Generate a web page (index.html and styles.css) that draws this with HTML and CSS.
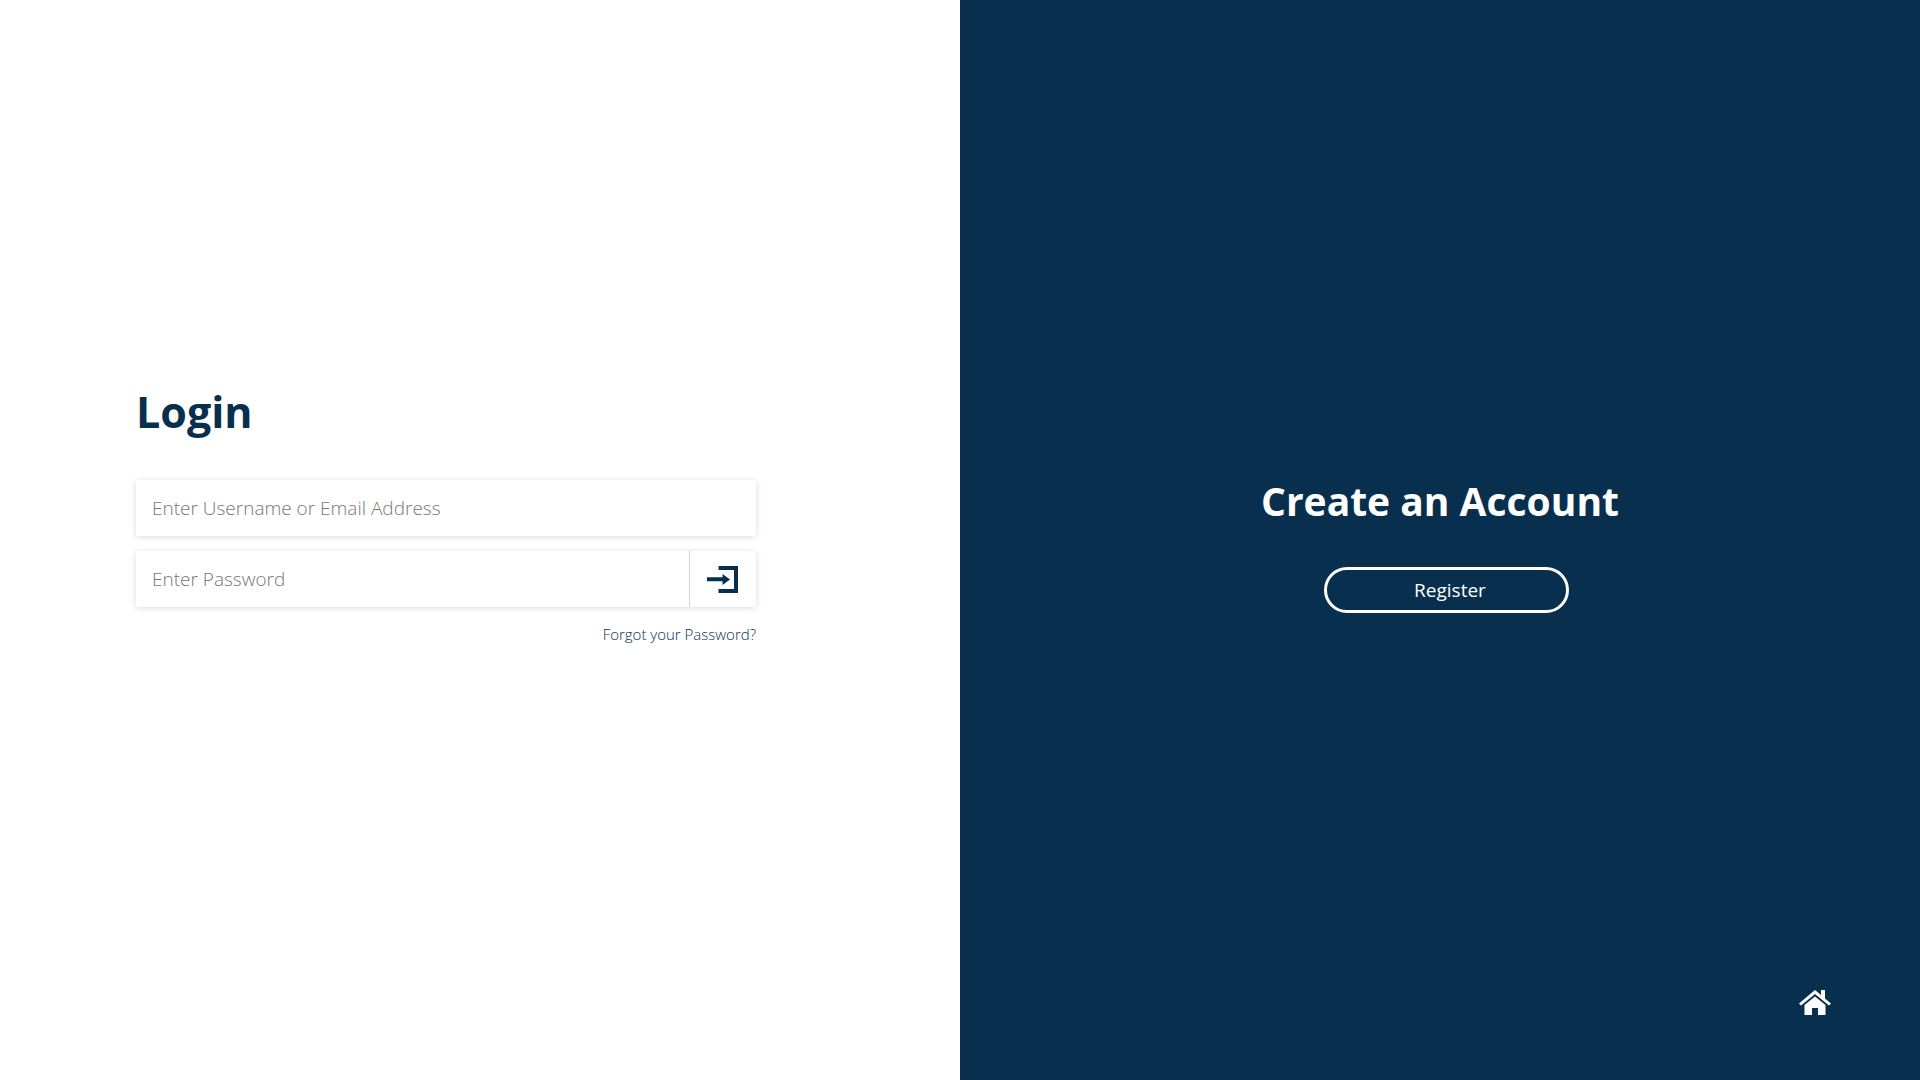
FILE: index.html
```html
<!DOCTYPE html>
<html lang="en">
<head>
  <meta charset="utf-8">
  <meta name="viewport" content="width=device-width, initial-scale=1">
  <title>Login</title>
  <link rel="stylesheet" href="styles.css">
</head>
<body>
  <main class="page">
    <section class="login">
      <form class="login-form">
        <h1 class="login-title">Login</h1>
        <div class="fields">
          <div class="field">
            <input class="field-input" type="text" aria-label="Username or email address" placeholder="Enter Username or Email Address">
          </div>
          <div class="field">
            <input class="field-input" type="password" aria-label="Password" placeholder="Enter Password">
            <button class="submit" type="submit" aria-label="Log in">
              <svg width="32" height="28" viewBox="0 0 32 28" fill="#08304e" aria-hidden="true">
                <path d="M11.500 1H31V28H11.500V24H27V5H11.500Z"/>
                <path d="M0 12.300H15.500V9L23 14.400L15.500 20V16.300H0Z"/>
              </svg>
            </button>
          </div>
        </div>
        <a class="forgot" href="#">Forgot your Password?</a>
      </form>
    </section>
    <section class="register">
      <h2 class="register-title">Create an Account</h2>
      <button class="register-button" type="button">Register</button>
      <a class="home" href="#" aria-label="Home">
        <svg width="32" height="26" viewBox="0 0 32 26" fill="#fff" aria-hidden="true">
          <path d="M16 0L22 5V0H26V8.400L32 13.400L30 15.500L16 4L2 15.500L0 13.400Z"/>
          <path d="M16 6.500L26.500 15V25H19V18H13V25H5.500V15Z"/>
        </svg>
      </a>
    </section>
  </main>
</body>
</html>
```
FILE: styles.css
```css
* {
  box-sizing: border-box;
}

body {
  margin: 0;
  font-family: "Open Sans", "Noto Sans", sans-serif;
  color: #08304e;
  background: #fff;
}

.page {
  display: grid;
  grid-template-columns: 1fr 1fr;
  min-height: 100vh;
}

.login {
  display: flex;
  align-items: center;
  padding: 0 204px 53px 136px;
}

.login-form {
  display: flex;
  flex-direction: column;
  width: 100%;
}

.login-title {
  margin: 0 0 38px;
  font-size: 43px;
  line-height: 60px;
}

.login-title,
.register-title {
  font-weight: 700;
}

.fields {
  display: grid;
  gap: 15px;
}

.field {
  display: flex;
  height: 56px;
  background: #fff;
  box-shadow: 0 1px 6px rgba(0, 0, 0, 0.15);
}

.field-input {
  flex: 1;
  min-width: 0;
  padding: 0 16px;
  border: 0;
  background: transparent;
  font-family: inherit;
  font-size: 19px;
  color: #08304e;
}

.field-input::placeholder {
  color: #777;
  font-weight: 300;
}

.submit {
  display: flex;
  align-items: center;
  justify-content: center;
  width: 67px;
  padding: 0;
  border: 0;
  border-left: 1px solid #d3d6da;
  background: transparent;
  cursor: pointer;
}

.forgot {
  align-self: flex-end;
  margin-top: 16px;
  font-size: 15px;
  line-height: 22px;
  font-weight: 300;
  color: #08304e;
  text-decoration: none;
}

.register {
  position: relative;
  display: flex;
  flex-direction: column;
  align-items: center;
  justify-content: center;
  padding-top: 10px;
  background: #08304e;
  color: #fff;
}

.register-title {
  margin: 0 0 42px;
  font-size: 39px;
  line-height: 48px;
}

.register-button {
  width: 245px;
  height: 46px;
  margin-left: 12px;
  padding: 0 0 0 8px;
  border: 3px solid #fff;
  border-radius: 23px;
  background: transparent;
  font-family: inherit;
  font-size: 19px;
  color: #fff;
  cursor: pointer;
}

.home {
  position: absolute;
  right: 89px;
  bottom: 64px;
  display: flex;
}
```
